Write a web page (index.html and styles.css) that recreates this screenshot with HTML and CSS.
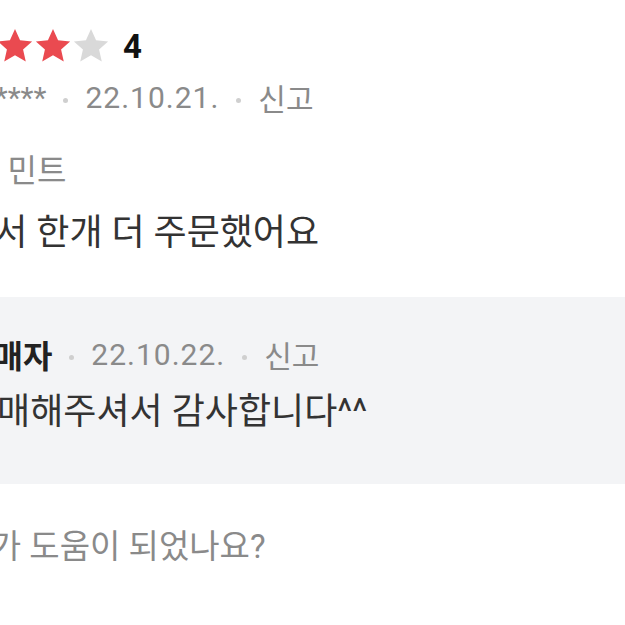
FILE: index.html
```html
<!DOCTYPE html>
<html lang="ko">
  <head>
    <meta charset="UTF-8" />
    <meta name="viewport" content="width=device-width, initial-scale=1.0" />
    <title>리뷰</title>
    <link rel="stylesheet" href="styles.css">
  </head>
  <body>
    <div class="page">
      <div class="review">
        <div class="rating">
          <svg class="star on" viewBox="0 0 24 24"><path d="M12 1.3l3.2 7 7.6.8-5.7 5.1 1.7 7.6L12 17.9l-6.8 3.9 1.7-7.6-5.7-5.1 7.6-.8z"/></svg>
          <svg class="star on" viewBox="0 0 24 24"><path d="M12 1.3l3.2 7 7.6.8-5.7 5.1 1.7 7.6L12 17.9l-6.8 3.9 1.7-7.6-5.7-5.1 7.6-.8z"/></svg>
          <svg class="star on" viewBox="0 0 24 24"><path d="M12 1.3l3.2 7 7.6.8-5.7 5.1 1.7 7.6L12 17.9l-6.8 3.9 1.7-7.6-5.7-5.1 7.6-.8z"/></svg>
          <svg class="star on" viewBox="0 0 24 24"><path d="M12 1.3l3.2 7 7.6.8-5.7 5.1 1.7 7.6L12 17.9l-6.8 3.9 1.7-7.6-5.7-5.1 7.6-.8z"/></svg>
          <svg class="star" viewBox="0 0 24 24"><path d="M12 1.3l3.2 7 7.6.8-5.7 5.1 1.7 7.6L12 17.9l-6.8 3.9 1.7-7.6-5.7-5.1 7.6-.8z"/></svg>
          <span class="score">4</span>
        </div>
        <div class="meta user">
          <span>hana****</span>
          <span class="dot"></span>
          <span class="date">22.10.21.</span>
          <span class="dot"></span>
          <span>신고</span>
        </div>
        <div class="option">옵션 : 민트</div>
        <p class="content">좋아서 한개 더 주문했어요</p>

        <div class="reply">
          <div class="meta">
            <span class="seller">판매자</span>
            <span class="dot"></span>
            <span class="date">22.10.22.</span>
            <span class="dot"></span>
            <span>신고</span>
          </div>
          <p class="content">구매해주셔서 감사합니다^^</p>
        </div>

        <div class="helpful">리뷰가 도움이 되었나요?</div>
      </div>
    </div>
  </body>
</html>
```

FILE: styles.css
```css
body {
  margin: 0;
  background: #fff;
  font-family: Roboto, "Noto Sans CJK KR", sans-serif;
  color: #333;
}
.page {
  width: 625px;
  height: 625px;
  overflow: hidden;
}
.review {
  margin-left: -76px;
  padding-top: 27px;
}
.rating {
  display: flex;
  align-items: center;
  height: 38px;
  margin-left: -4px;
}
.star {
  width: 38px;
  height: 38px;
  fill: #d9d9d9;
}
.star.on {
  fill: #ea4a50;
}
.score {
  margin-left: 13px;
  font-size: 33px;
  font-weight: 700;
  color: #111;
}
.meta {
  display: flex;
  align-items: center;
  margin-top: 12px;
  height: 40px;
  font-size: 30px;
  color: #8a8a8a;
}
.meta.user {
  margin-left: 5px;
}
.date {
  letter-spacing: 1px;
}
.dot {
  width: 5px;
  height: 5px;
  margin: 6px 17px 0;
  border-radius: 50%;
  background: #cfcfcf;
}
.option {
  margin: 34px 0 0 1px;
  line-height: 40px;
  font-size: 32px;
  color: #8a8a8a;
}
.content {
  margin: 20px 0 0 4px;
  line-height: 44px;
  font-size: 36px;
  color: #333;
}
.reply {
  margin-top: 42px;
  padding: 35px 0 50px 40px;
  background: #f3f4f6;
}
.reply .meta {
  margin-top: 0;
  height: 44px;
}
.seller {
  font-size: 32px;
  font-weight: 700;
  color: #222;
}
.reply .content {
  margin: 14px 0 0;
}
.helpful {
  margin: 41px 0 0 6px;
  line-height: 44px;
  font-size: 33px;
  color: #8a8a8a;
}
```
